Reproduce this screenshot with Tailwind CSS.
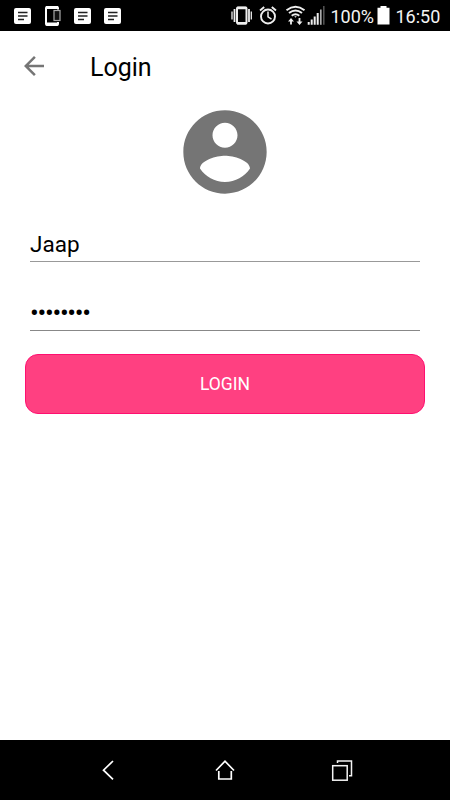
<!DOCTYPE html>
<html lang="en">
<head>
<meta charset="utf-8">
<title>Login</title>
<script src="https://cdn.jsdelivr.net/npm/@tailwindcss/browser@4"></script>
</head>
<body class="w-[450px] h-[800px] flex flex-col bg-white overflow-hidden font-[Roboto,sans-serif] text-black">
  <div class="h-[31px] shrink-0 bg-black flex items-start text-[#f4f4f4]">
    <svg class="w-[130px] h-[31px] shrink-0" viewBox="0 0 130 31">
      <defs>
        <g id="note">
          <rect x="0" y="0" width="17" height="16" rx="2" fill="#fff"/>
          <path d="M4 4.500h9.500M4 8h9.500M4 11.500h6" stroke="#222" stroke-width="1.300"/>
        </g>
      </defs>
      <use href="#note" x="14" y="8"/>
      <rect x="46" y="7" width="12" height="18" rx="1" fill="none" stroke="#fff" stroke-width="2"/>
      <path d="M46 7.500h12M46 24h12" stroke="#fff" stroke-width="3"/>
      <rect x="52.500" y="9.500" width="9" height="12.500" fill="#000"/>
      <rect x="54" y="10.500" width="6" height="10" fill="#111" stroke="#aaa" stroke-width="1.200"/>
      <use href="#note" x="74" y="8"/>
      <use href="#note" x="104" y="8"/>
    </svg>
    <svg class="w-[98px] h-[31px] shrink-0 ml-[98px]" viewBox="228 0 98 31" fill="none" stroke="#eee">
      <rect x="237" y="7.500" width="9.500" height="16" rx="1" stroke-width="2"/>
      <path d="M237 8h9.500M237 23.300h9.500" stroke-width="2.500"/>
      <path d="M234.500 9v13M249 9v13" stroke-width="1.800"/>
      <path d="M232 11.500v8M251.300 11.500v8" stroke-width="1.300"/>
      <circle cx="268" cy="16.500" r="7" stroke-width="1.900"/>
      <path d="M268 11.500v5.300l3.500 2.300" stroke-width="1.500"/>
      <path d="M260 10.500l4.200-3.500M276 10.500l-4.200-3.500" stroke-width="1.900"/>
      <path d="M286.500 10.200Q295.500 3.500 304.500 10.200M289 13Q295.500 8 302 13M291.700 15.700Q295.500 12.800 299.300 15.700" stroke-width="2"/>
      <path d="M294.300 16.300h2.400l-1.200 1.400z" fill="#eee" stroke="none"/>
      <path d="M291 24.500v-5M299.500 18v5" stroke-width="1.800"/>
      <path d="M288 21.500l3-3.500 3 3.500zM296.500 21.500h6l-3 3.500z" fill="#eee" stroke="none"/>
      <path d="M308.700 22v2.800M311.700 19.500v5.300M314.700 16.500v8.300M317.700 13v11.800" stroke-width="2"/>
      <path d="M320.800 9.500v15.300" stroke="#aaa" stroke-width="1.700"/>
      <path d="M323.800 6v18.800" stroke="#555" stroke-width="1.500"/>
    </svg>
    <span class="ml-[4.500px] w-[45px] text-[18px] leading-[33px] whitespace-nowrap">100%</span>
    <svg class="w-[14px] h-[31px] shrink-0" viewBox="0 0 14 31"><path d="M4.500 6h6v1.700h3V24.500H1.500V7.700h3z" fill="#fff"/></svg>
    <span class="ml-[6px] text-[18px] leading-[33px] whitespace-nowrap">16:50</span>
  </div>

  <header class="h-[70px] shrink-0 flex items-center pl-[19px]">
    <svg class="w-[30px] h-[30px]" viewBox="0 0 24 24"><path d="M20 11H7.830l5.590-5.590L12 4l-8 8 8 8 1.410-1.410L7.830 13H20v-2z" fill="#757575"/></svg>
    <h1 class="ml-[41px] mt-[3px] text-[25px] leading-[30px]">Login</h1>
  </header>

  <main class="grow flex flex-col">
    <svg class="w-[100px] h-[100px] self-center mt-[1px] shrink-0" viewBox="0 0 24 24"><path fill="#757575" d="M12 2C6.480 2 2 6.480 2 12s4.480 10 10 10 10-4.480 10-10S17.520 2 12 2zm0 3c1.660 0 3 1.340 3 3s-1.340 3-3 3-3-1.340-3-3 1.340-3 3-3zm0 14.200c-2.500 0-4.710-1.280-6-3.220.030-1.990 4-3.080 6-3.080 1.990 0 5.970 1.090 6 3.080-1.290 1.940-3.500 3.220-6 3.220z"/></svg>
    <div class="mx-[30px] mt-[26px] h-[34px] border-b border-[#999] text-[22.500px] leading-[32px]">Jaap</div>
    <div class="mx-[30px] mt-[35px] h-[34px] border-b border-[#888] text-[26px] leading-[33px] tracking-[-1.300px]">••••••••</div>
    <button class="mx-[25px] mt-[22.500px] h-[60px] rounded-[13px] border border-[#ff0f70] bg-[#ff4081] text-white text-[17.500px] leading-[20px]">LOGIN</button>
  </main>

  <nav class="h-[60px] shrink-0 bg-black flex items-center justify-center gap-[87px]">
    <svg class="w-[30px] h-[30px]" viewBox="93 755 30 30" fill="none" stroke="#fff" stroke-width="1.700"><path d="M113 761l-9.500 9.200 9.500 9.200"/></svg>
    <svg class="w-[30px] h-[30px]" viewBox="210 755 30 30" fill="none" stroke="#fff" stroke-width="1.700"><path d="M216 770.500l9-9.300 9 9.300"/><path d="M218.800 771v8h12.500v-8"/></svg>
    <svg class="w-[30px] h-[30px]" viewBox="327 755 30 30" fill="none" stroke="#f4f4f4" stroke-width="1.500"><rect x="332.700" y="765.700" width="14.500" height="14.500"/><path d="M337.500 763v-2h14v14.700h-2.500"/></svg>
  </nav>
</body>
</html>
